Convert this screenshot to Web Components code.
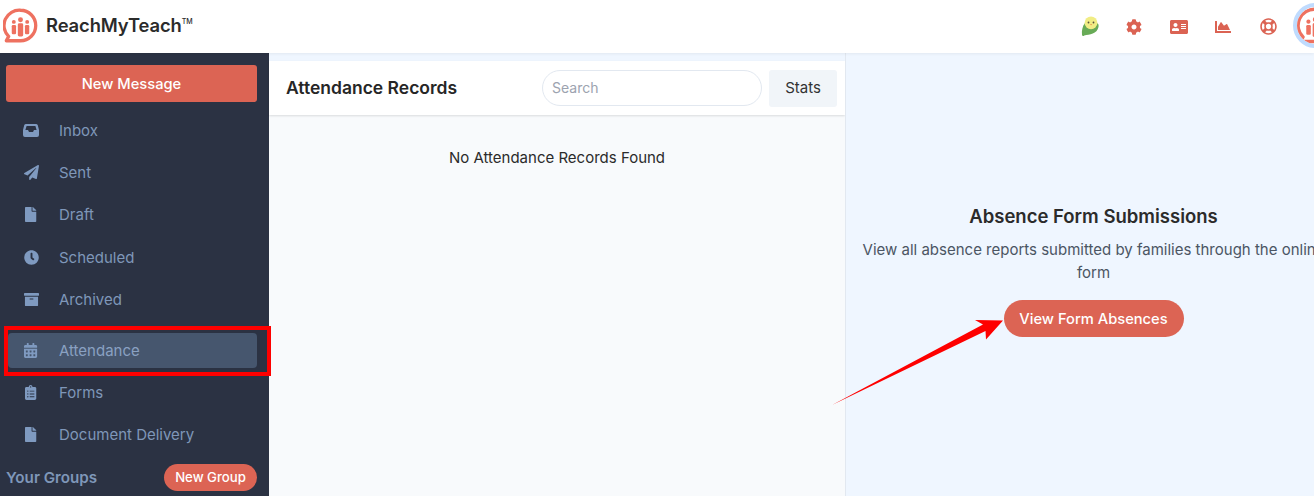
<!DOCTYPE html>
<html>
<head>
<meta charset="utf-8">
<title>Attendance</title>
<style>
  html, body { margin:0; height:100%; overflow:hidden; }
  body { font-family:Inter, "Liberation Sans", sans-serif; color:#222; }
</style>
</head>
<body>
<rmt-app></rmt-app>

<script>
const ICONS = {
  inbox: ['0 0 16 15', 'M3 1h10a2 2 0 0 1 1.8 1.2L16 7v5a2 2 0 0 1-2 2H2a2 2 0 0 1-2-2V7l1.200-4.800A2 2 0 0 1 3 1zM3.600 3L2.400 7H5l1 2h4l1-2h2.600L12.400 3z'],
  plane: ['0 0 512 512', 'M476 3.2L12.5 270.6c-18.1 10.4-15.8 35.6 2.2 43.2L121 358.4l287.3-253.2c5.5-4.9 13.3 2.6 8.6 8.3L176 407v80.5c0 23.6 28.5 32.9 42.5 15.8L282 426l124.6 52.2c14.2 6 30.4-2.9 33-18.2l72-432C515 7.8 493.3-6.8 476 3.2z'],
  file: ['0 0 384 512', 'M224 136V0H24C10.7 0 0 10.7 0 24v464c0 13.3 10.7 24 24 24h336c13.3 0 24-10.7 24-24V160H248c-13.2 0-24-10.8-24-24zm160-14.1v6.1H256V0h6.1c6.4 0 12.5 2.5 17 7l97.9 98c4.5 4.5 7 10.6 7 16.9z'],
  clock: ['0 0 512 512', 'M256,8C119,8,8,119,8,256S119,504,256,504,504,393,504,256,393,8,256,8Zm92.49,313h0l-20,25a16,16,0,0,1-22.49,2.5h0l-67-49.72a40,40,0,0,1-15-31.23V112a16,16,0,0,1,16-16h32a16,16,0,0,1,16,16V256l58,42.5A16,16,0,0,1,348.49,321Z'],
  archive: ['0 0 512 512', 'M32 448c0 17.7 14.3 32 32 32h384c17.7 0 32-14.3 32-32V160H32v288zm160-212c0-6.6 5.4-12 12-12h104c6.6 0 12 5.4 12 12v8c0 6.6-5.4 12-12 12H204c-6.6 0-12-5.4-12-12v-8zM480 32H32C14.3 32 0 46.3 0 64v48c0 8.8 7.2 16 16 16h480c8.8 0 16-7.2 16-16V64c0-17.7-14.3-32-32-32z'],
  calendar: ['0 0 448 512', 'M0 464c0 26.5 21.5 48 48 48h352c26.5 0 48-21.5 48-48V192H0v272zm320-196c0-6.6 5.4-12 12-12h40c6.6 0 12 5.4 12 12v40c0 6.6-5.4 12-12 12h-40c-6.6 0-12-5.4-12-12v-40zm0 128c0-6.6 5.4-12 12-12h40c6.6 0 12 5.4 12 12v40c0 6.6-5.4 12-12 12h-40c-6.6 0-12-5.4-12-12v-40zM192 268c0-6.6 5.4-12 12-12h40c6.6 0 12 5.4 12 12v40c0 6.6-5.4 12-12 12h-40c-6.6 0-12-5.4-12-12v-40zm0 128c0-6.6 5.4-12 12-12h40c6.6 0 12 5.4 12 12v40c0 6.6-5.4 12-12 12h-40c-6.6 0-12-5.4-12-12v-40zM64 268c0-6.6 5.4-12 12-12h40c6.6 0 12 5.4 12 12v40c0 6.6-5.4 12-12 12H76c-6.6 0-12-5.4-12-12v-40zm0 128c0-6.6 5.4-12 12-12h40c6.6 0 12 5.4 12 12v40c0 6.6-5.4 12-12 12H76c-6.6 0-12-5.4-12-12v-40zM400 64h-48V16c0-8.8-7.2-16-16-16h-32c-8.8 0-16 7.2-16 16v48H160V16c0-8.8-7.2-16-16-16h-32c-8.8 0-16 7.2-16 16v48H48C21.5 64 0 85.5 0 112v48h448v-48c0-26.5-21.5-48-48-48z'],
  clipboard: ['0 0 384 512', 'M336 64h-80c0-35.3-28.7-64-64-64s-64 28.7-64 64H48C21.5 64 0 85.5 0 112v352c0 26.5 21.5 48 48 48h288c26.5 0 48-21.5 48-48V112c0-26.5-21.5-48-48-48zM96 424c-13.3 0-24-10.7-24-24s10.7-24 24-24 24 10.7 24 24-10.7 24-24 24zm0-96c-13.3 0-24-10.7-24-24s10.7-24 24-24 24 10.7 24 24-10.7 24-24 24zm0-96c-13.3 0-24-10.7-24-24s10.7-24 24-24 24 10.7 24 24-10.7 24-24 24zm96-192c13.3 0 24 10.7 24 24s-10.7 24-24 24-24-10.7-24-24 10.7-24 24-24zm128 368c0 4.4-3.6 8-8 8H168c-4.4 0-8-3.6-8-8v-16c0-4.4 3.6-8 8-8h144c4.4 0 8 3.6 8 8v16zm0-96c0 4.4-3.6 8-8 8H168c-4.4 0-8-3.6-8-8v-16c0-4.4 3.6-8 8-8h144c4.4 0 8 3.6 8 8v16zm0-96c0 4.4-3.6 8-8 8H168c-4.4 0-8-3.6-8-8v-16c0-4.4 3.6-8 8-8h144c4.4 0 8 3.6 8 8v16z'],
  cog: ['0 0 512 512', 'M487.4 315.7l-42.6-24.6c4.3-23.2 4.3-47 0-70.2l42.6-24.6c4.9-2.8 7.1-8.6 5.5-14-11.1-35.6-30-67.8-54.7-94.6-3.8-4.1-10-5.1-14.8-2.3L380.8 110c-17.9-15.4-38.5-27.3-60.8-35.1V25.8c0-5.6-3.9-10.5-9.4-11.7-36.7-8.2-74.3-7.8-109.2 0-5.5 1.2-9.4 6.1-9.4 11.7V75c-22.2 7.9-42.8 19.8-60.8 35.1L88.7 85.5c-4.9-2.8-11-1.9-14.8 2.3-24.7 26.7-43.6 58.9-54.7 94.6-1.7 5.4.6 11.2 5.5 14L67.3 221c-4.3 23.2-4.3 47 0 70.2l-42.6 24.6c-4.9 2.8-7.1 8.6-5.5 14 11.1 35.6 30 67.8 54.7 94.6 3.8 4.1 10 5.1 14.8 2.3l42.6-24.6c17.9 15.4 38.5 27.3 60.8 35.1v49.2c0 5.6 3.9 10.5 9.4 11.7 36.7 8.2 74.3 7.8 109.2 0 5.5-1.2 9.4-6.1 9.4-11.7v-49.2c22.2-7.9 42.8-19.8 60.8-35.1l42.6 24.6c4.9 2.8 11 1.9 14.8-2.3 24.7-26.7 43.6-58.9 54.7-94.6 1.5-5.5-.7-11.3-5.6-14.1zM256 336c-44.1 0-80-35.9-80-80s35.9-80 80-80 80 35.9 80 80-35.9 80-80 80z'],
  idcard: ['0 0 576 512', 'M528 32H48C21.5 32 0 53.5 0 80v352c0 26.5 21.5 48 48 48h480c26.5 0 48-21.5 48-48V80c0-26.5-21.500-48-48-48zM176 128c35.3 0 64 28.7 64 64s-28.700 64-64 64-64-28.700-64-64 28.700-64 64-64zm112 236.800c0 10.600-10 19.200-22.400 19.200H86.400C74 384 64 375.400 64 364.800v-19.200c0-31.800 30.100-57.600 67.200-57.600h5c12.300 5.100 25.700 8 39.800 8s27.600-2.900 39.800-8h5c37.100 0 67.200 25.800 67.200 57.600v19.200zM512 312c0 4.400-3.600 8-8 8H360c-4.400 0-8-3.600-8-8v-16c0-4.400 3.600-8 8-8h144c4.400 0 8 3.600 8 8v16zm0-64c0 4.400-3.600 8-8 8H360c-4.400 0-8-3.600-8-8v-16c0-4.400 3.600-8 8-8h144c4.400 0 8 3.600 8 8v16zm0-64c0 4.400-3.600 8-8 8H360c-4.400 0-8-3.600-8-8v-16c0-4.400 3.600-8 8-8h144c4.400 0 8 3.600 8 8v16z'],
  chart: ['0 0 512 512', 'M500 384c6.6 0 12 5.4 12 12v40c0 6.6-5.4 12-12 12H12c-6.6 0-12-5.4-12-12V76c0-6.6 5.4-12 12-12h40c6.6 0 12 5.4 12 12v308h436zM372.7 159.5L288 216l-85.3-113.7c-5.1-6.8-15.5-6.3-19.9 1L96 248v104h384l-89.9-187.8c-3.2-6.5-11.4-8.7-17.4-4.7z'],
  lifering: ['0 0 512 512', 'M256 504c136.967 0 248-111.033 248-248S392.967 8 256 8 8 119.033 8 256s111.033 248 248 248zm-103.398-76.72l53.411-53.411c31.806 13.506 68.128 13.522 99.974 0l53.411 53.411c-63.217 38.319-143.579 38.319-206.796 0zM336 256c0 44.112-35.888 80-80 80s-80-35.888-80-80 35.888-80 80-80 80 35.888 80 80zm91.28 103.398l-53.411-53.411c13.505-31.806 13.522-68.128 0-99.974l53.411-53.411c38.319 63.217 38.319 143.579 0 206.796zM359.397 84.72l-53.411 53.411c-31.806-13.505-68.128-13.522-99.973 0L152.602 84.72c63.217-38.319 143.579-38.319 206.795 0zM84.72 152.602l53.411 53.411c-13.506 31.806-13.522 68.128 0 99.974L84.72 359.398c-38.319-63.217-38.319-143.579 0-206.796z']
}

// the bubble logo, used in the header and in the avatar
const LOGO = `<svg viewBox="0 0 34 34" width="100%" height="100%" style="display:block">
  <path d="M17 2.2a14.8 14.8 0 0 1 0 29.6H3.2l2.3-4.2A14.8 14.8 0 0 1 17 2.2z" fill="#fff" stroke="#ee7160" stroke-width="3.2" stroke-linejoin="round"/>
  <g fill="#ee7160">
    <circle cx="17" cy="11.500" r="2.400"/><rect x="14.400" y="14.800" width="5.200" height="12.800" rx="1.400"/>
    <circle cx="10.500" cy="13.500" r="1.900"/><rect x="8.500" y="16.500" width="4.200" height="9" rx="1.200"/>
    <circle cx="23.500" cy="13.500" r="1.900"/><rect x="21.300" y="16.500" width="4.200" height="9" rx="1.200"/>
  </g>
</svg>`

customElements.define('rmt-icon',
class RmtIcon extends HTMLElement {
  connectedCallback() {
    const [box, d] = ICONS[this.getAttribute('name')]
    this.attachShadow({mode: 'open'}).innerHTML = `
      <style>
        :host { display:inline-flex; align-items:center; justify-content:center; }
        svg { display:block; height:var(--icon-size, 16px); fill:currentColor; }
      </style>
      <svg viewBox="${box}"><path fill-rule="evenodd" d="${d}"/></svg>`
  }
})

customElements.define('rmt-header',
class RmtHeader extends HTMLElement {
  constructor() {
    super()
    this.attachShadow({mode: 'open'}).innerHTML = `
      <style>
        :host { display:flex; align-items:center; height:53px; flex:none; background:#fff; position:relative; z-index:2; box-shadow:0 1px 3px rgba(0,0,0,.06); }
        .logo { width:35px; height:35px; margin:-3px 8px 0 3px; flex:none; }
        .name { font-size:18.4px; font-weight:600; color:#2b2b2b; letter-spacing:-.1px; margin-top:-3px; }
        .name sup { font-size:7px; font-weight:500; vertical-align:8px; line-height:0; letter-spacing:0; }
        .tools { margin-left:auto; display:flex; align-items:center; color:#db6353; margin-right:-24px; }
        .tools rmt-icon { width:18px; margin-left:26.700px; --icon-size:16px; }
        .tools rmt-icon.ring { --icon-size:17px; }
        .bird { width:20px; height:24px; display:block; margin-right:-2px; }
        .avatar { width:37px; height:37px; border-radius:50%; border:4px solid #bfdbfe; margin:-2px 0 0 16px; overflow:hidden; background:#fff; flex:none; }
      </style>
      <div class="logo">${LOGO}</div>
      <div class="name">ReachMyTeach<sup>TM</sup></div>
      <div class="tools">
        <svg class="bird" viewBox="0 0 20 24">
          <path d="M5 8C2.400 11 1.500 16 2 20c.3 1.400 1.600 1.200 2.200.4C9.500 19.500 17 19 18.500 12 19 9 18 8 16 8z" fill="#68ab57"/>
          <circle cx="11" cy="7.800" r="6.400" fill="#f1ed85"/>
          <circle cx="8.500" cy="7.500" r=".9" fill="#55513a"/><circle cx="13.500" cy="7.500" r=".9" fill="#55513a"/>
          <path d="M10 9h2.200l-1.100 1.400z" fill="#ea9a4f"/>
        </svg>
        <rmt-icon name="cog"></rmt-icon>
        <rmt-icon name="idcard"></rmt-icon>
        <rmt-icon name="chart"></rmt-icon>
        <rmt-icon name="lifering" class="ring"></rmt-icon>
        <div class="avatar">${LOGO}</div>
      </div>`
  }
})

customElements.define('rmt-nav-item',
class RmtNavItem extends HTMLElement {
  connectedCallback() {
    this.attachShadow({mode: 'open'}).innerHTML = `
      <style>
        :host { display:flex; align-items:center; height:35px; margin-left:2px; border-radius:4px; color:#7f97b9; font-size:15px; font-weight:400; }
        :host([active]) { background:#46566e; color:#8aa1c2; }
        rmt-icon { width:16px; margin:0 20px 0 15px; --icon-size:15px; color:#7f9ac0; }
      </style>
      <rmt-icon name="${this.getAttribute('icon')}"></rmt-icon>
      <slot></slot>`
  }
})

customElements.define('rmt-sidebar',
class RmtSidebar extends HTMLElement {
  constructor() {
    super()
    this.attachShadow({mode: 'open'}).innerHTML = `
      <style>
        :host { display:flex; flex-direction:column; width:269px; flex:none; box-sizing:border-box; padding:12px 12px 0 6px; background:#2b3243; }
        .new { height:37px; background:#dc6454; border-radius:3px; color:#fff; font-size:14.700px; font-weight:500; display:flex; align-items:center; justify-content:center; margin-bottom:11px; }
        nav { display:flex; flex-direction:column; gap:7.200px; }
        .attendance { margin-top:9px; }
        .groups { display:flex; justify-content:space-between; align-items:center; margin-top:11.300px; }
        .groups b { font-size:15.200px; font-weight:600; color:#7f97b9; }
        .groups span { background:#dc6454; color:#fff; font-size:13.200px; font-weight:500; height:27px; width:93px; border-radius:14px; display:flex; align-items:center; justify-content:center; }
      </style>
      <div class="new">New Message</div>
      <nav>
        <rmt-nav-item icon="inbox">Inbox</rmt-nav-item>
        <rmt-nav-item icon="plane">Sent</rmt-nav-item>
        <rmt-nav-item icon="file">Draft</rmt-nav-item>
        <rmt-nav-item icon="clock">Scheduled</rmt-nav-item>
        <rmt-nav-item icon="archive">Archived</rmt-nav-item>
        <rmt-nav-item icon="calendar" class="attendance" active>Attendance</rmt-nav-item>
        <rmt-nav-item icon="clipboard">Forms</rmt-nav-item>
        <rmt-nav-item icon="file">Document Delivery</rmt-nav-item>
      </nav>
      <div class="groups"><b>Your Groups</b><span>New Group</span></div>`
  }
})

customElements.define('rmt-records',
class RmtRecords extends HTMLElement {
  constructor() {
    super()
    this.attachShadow({mode: 'open'}).innerHTML = `
      <style>
        :host { display:flex; flex-direction:column; width:576px; flex:none; margin-top:8px; background:#f8fafc; }
        .bar { height:54px; flex:none; display:flex; align-items:center; background:#fff; box-shadow:0 1px 2px rgba(0,0,0,.12); padding:0 8px 0 17px; box-sizing:border-box; }
        h2 { margin:0 0 2px; font-size:17.500px; font-weight:600; color:#262626; flex:1; }
        .search { width:220px; height:36px; box-sizing:border-box; border:1px solid #e2e8f0; border-radius:18px; padding:0 0 2px 9px; display:flex; align-items:center; color:#9ca3af; font-size:14px; background:#fff; }
        .stats { width:68px; height:37px; box-sizing:border-box; padding-bottom:2px; margin-left:7px; background:#f1f5f9; border-radius:3px; display:flex; align-items:center; justify-content:center; color:#333; font-size:15px; }
        .empty { text-align:center; font-size:15px; color:#2b2b2b; margin-top:33px; }
      </style>
      <div class="bar">
        <h2>Attendance Records</h2>
        <div class="search">Search</div>
        <div class="stats">Stats</div>
      </div>
      <div class="empty">No Attendance Records Found</div>`
  }
})

customElements.define('rmt-absence',
class RmtAbsence extends HTMLElement {
  constructor() {
    super()
    this.attachShadow({mode: 'open'}).innerHTML = `
      <style>
        :host { display:flex; flex-direction:column; align-items:center; width:496px; flex:none; box-sizing:border-box; border-left:1px solid #e2e8f0; padding:152px 0 0; background:#eff6ff; }
        h3 { margin:0; font-size:18.500px; font-weight:600; color:#2b2b2b; }
        p { margin:11px 0 0; width:480px; text-align:center; font-size:15px; line-height:23px; color:#4b5563; }
        .view { margin-top:16px; width:180px; height:37px; border-radius:19px; background:#dc6454; color:#fff; font-size:14.700px; font-weight:500; display:flex; align-items:center; justify-content:center; }
      </style>
      <h3>Absence Form Submissions</h3>
      <p>View all absence reports submitted by families through the online form</p>
      <div class="view">View Form Absences</div>`
  }
})

// the red marks someone drew over the screenshot
customElements.define('rmt-annotations',
class RmtAnnotations extends HTMLElement {
  constructor() {
    super()
    this.attachShadow({mode: 'open'}).innerHTML = `
      <style>
        :host { position:absolute; inset:0; pointer-events:none; z-index:5; display:block; }
        .box { position:absolute; left:4px; top:326px; width:259px; height:42px; border:4px solid #fe0000; }
        svg { position:absolute; left:0; top:0; }
      </style>
      <div class="box"></div>
      <svg width="1314" height="496"><polygon points="832,405 983,324.500 975,320 1003,320.500 986,339.500 985.500,331" fill="#fe0000"/></svg>`
  }
})

customElements.define('rmt-app',
class RmtApp extends HTMLElement {
  constructor() {
    super()
    this.attachShadow({mode: 'open'}).innerHTML = `
      <style>
        :host { display:flex; flex-direction:column; position:relative; width:1314px; height:496px; overflow:hidden; background:#eff6ff; }
        main { display:flex; flex:1; min-height:0; }
      </style>
      <rmt-header></rmt-header>
      <main>
        <rmt-sidebar></rmt-sidebar>
        <rmt-records></rmt-records>
        <rmt-absence></rmt-absence>
      </main>
      <rmt-annotations></rmt-annotations>`
  }
})
</script>
</body>
</html>
